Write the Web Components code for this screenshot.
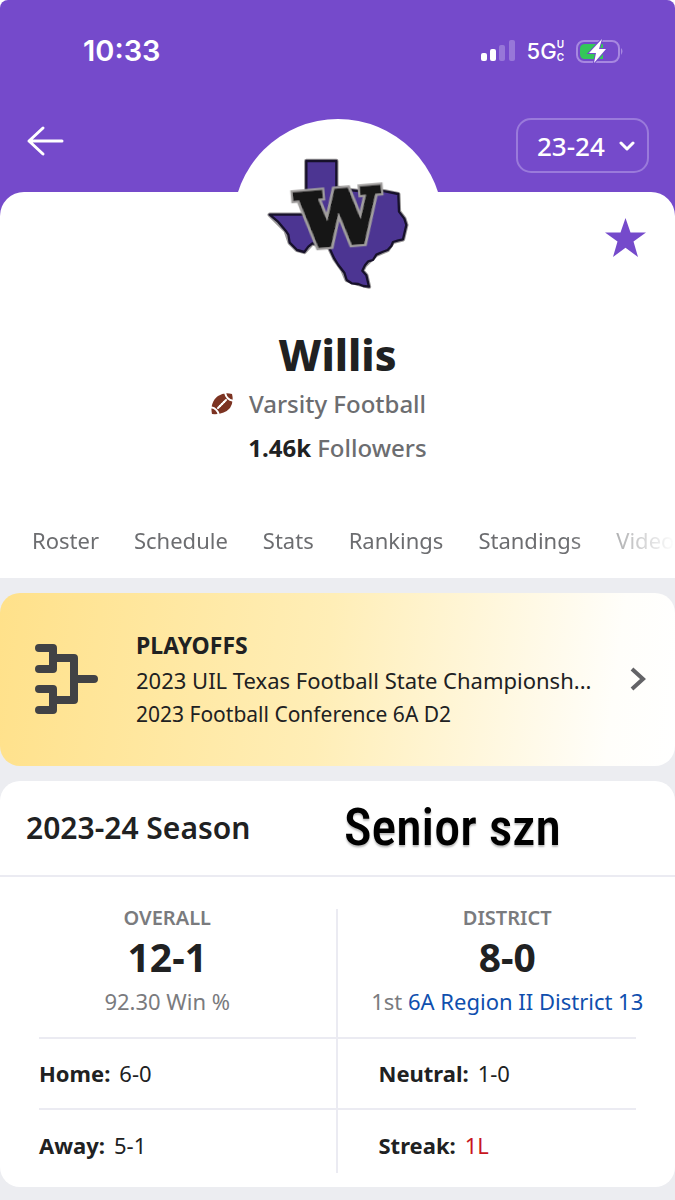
<!DOCTYPE html>
<html lang="en">
<head>
<meta charset="utf-8">
<meta name="viewport" content="width=device-width, initial-scale=1">
<title>Willis Varsity Football</title>
<style>
  :root {
    --brand: #754acb;
    --ink: #202122;
    --muted: #6c6d70;
    --line: #ebebf2;
    --page: #ecedf1;
  }
  body {
    margin: 0;
    background: var(--page);
    color: var(--ink);
    font: 22px/28px "Noto Sans", "Open Sans", sans-serif;
  }
</style>
</head>
<body>
<team-page></team-page>

<script>
class StatusBar extends HTMLElement {
  constructor() {
    super();
    this.attachShadow({ mode: 'open' });
    this.shadowRoot.innerHTML = `
      <style>
        :host {
          display: flex;
          align-items: center;
          justify-content: space-between;
          padding: 33px 51px 0 83px;
          color: #fff;
          font-family: Inter, sans-serif;
        }
        time { font-size: 29px; line-height: 36px; font-weight: 600; }
        .right { display: flex; align-items: center; gap: 12px; }
        .net { display: flex; align-items: center; font-size: 22px; font-weight: 500; }
        .net small {
          display: grid;
          font-size: 10px;
          line-height: 13px;
          font-weight: 600;
        }
        svg { display: block; }
      </style>
      <time><slot></slot></time>
      <div class="right">
        <svg width="34" height="22" viewBox="0 0 34 22" fill="#fff">
          <rect x="0" y="13" width="6" height="8" rx="2"/>
          <rect x="9" y="9" width="6" height="12" rx="2"/>
          <rect x="18" y="5" width="6" height="16" rx="2" opacity=".25"/>
          <rect x="28" y="0" width="6" height="21" rx="2" opacity=".25"/>
        </svg>
        <span class="net">5G<small><span>U</span><span>C</span></small></span>
        <svg width="48" height="24" viewBox="0 0 48 24">
          <rect x="1" y="2" width="42" height="21" rx="7" fill="none" stroke="#a788e0" stroke-width="2"/>
          <path d="M45 9q3 3 0 7z" fill="#a788e0"/>
          <path d="M9 5h18v15H9q-5 0-5-5V10q0-5 5-5z" fill="#34c759"/>
          <path d="M26 0L13 14h7l-2 10 12-14h-7z" fill="#fff" stroke="#754acb" stroke-width="2" paint-order="stroke"/>
        </svg>
      </div>
    `;
  }
}

class SeasonPicker extends HTMLElement {
  constructor() {
    super();
    this.attachShadow({ mode: 'open' });
    const years = (this.getAttribute('years') || '').split(',');
    this.shadowRoot.innerHTML = `
      <style>
        :host { display: grid; align-items: center; }
        select, svg { grid-area: 1 / 1; }
        select {
          appearance: none;
          width: 133px;
          height: 55px;
          padding: 0 19px;
          border: 2px solid #9a7adb;
          border-radius: 15px;
          background: transparent;
          color: #fff;
          font: 500 26px/28px "Noto Sans", "Open Sans", sans-serif;
        }
        option { color: #202122; }
        svg { justify-self: end; margin-right: 14px; pointer-events: none; }
      </style>
      <select aria-label="Season">
        ${years.map(y => `<option>${y}</option>`).join('')}
      </select>
      <svg width="16" height="12" viewBox="0 0 16 12" fill="none" stroke="#fff" stroke-width="3" stroke-linecap="round" stroke-linejoin="round">
        <path d="M2 3l6 6 6-6"/>
      </svg>
    `;
  }
}

class TeamLogo extends HTMLElement {
  constructor() {
    super();
    this.attachShadow({ mode: 'open' });
    this.shadowRoot.innerHTML = `
      <style>
        :host {
          display: block;
          width: 210px;
          height: 210px;
          border-radius: 50%;
          background: #fff;
        }
        svg { display: block; width: 100%; height: 100%; }
        text {
          font: bold 220px "DejaVu Serif", serif;
          fill: #161817;
          stroke: #161817;
          stroke-width: 14;
        }
      </style>
      <svg viewBox="-6 27 630 630" role="img" aria-label="Team logo">
        <defs>
          <filter id="edge" x="-10%" y="-10%" width="120%" height="120%">
            <feMorphology in="SourceAlpha" operator="dilate" radius="5" result="fat"/>
            <feFlood flood-color="#a19f9e"/>
            <feComposite in2="fat" operator="in"/>
            <feMerge><feMergeNode/><feMergeNode in="SourceGraphic"/></feMerge>
          </filter>
        </defs>
        <path fill="#4c3592" stroke="#9a9898" stroke-width="13" stroke-linejoin="round" d="M214 153H304V232L340 240L380 244L420 240L450 244L490 252L492 305L508 326L514 345L504 388L474 396L458 420L424 434L390 466L382 482L394 496L402 530L370 522L335 510L322 480L298 446L282 412L232 400L208 426L186 420L164 398L152 362L104 314H214Z"/>
        <path fill="#4c3592" stroke="#17112b" stroke-width="7" stroke-linejoin="round" d="M214 153H304V232L340 240L380 244L420 240L450 244L490 252L492 305L508 326L514 345L504 388L490 391L474 396L469 408L458 420L442 426L424 434L414 450L400 454L390 466L382 482L394 496L402 530L385 528L370 522L350 520L335 510L328 488L310 465L298 446L282 412L232 400L220 410L208 426L186 420L164 398L160 374L152 362L128 334L104 314H214Z"/>
        <text x="312" y="401" text-anchor="middle" transform="rotate(-5 312 320)" filter="url(#edge)">W</text>
      </svg>
    `;
  }
}

class TeamHeader extends HTMLElement {
  constructor() {
    super();
    this.attachShadow({ mode: 'open' });
    this.shadowRoot.innerHTML = `
      <style>
        :host { display: block; background: #fff; }
        header {
          padding-bottom: 19px;
          border-radius: 8px 8px 0 0;
          background: var(--brand);
        }
        .bar {
          display: flex;
          justify-content: space-between;
          align-items: flex-start;
          padding: 49px 26px 0;
        }
        button {
          display: grid;
          place-items: center;
          height: 46px;
          padding: 0;
          border: 0;
          background: none;
          cursor: pointer;
        }
      </style>
      <header>
        <status-bar>10:33</status-bar>
        <div class="bar">
          <button aria-label="Back">
            <svg width="38" height="32" viewBox="0 0 38 32" fill="none" stroke="#fff" stroke-width="3" stroke-linecap="round" stroke-linejoin="round">
              <path d="M36 16H3M17 3L3 16l14 13"/>
            </svg>
          </button>
          <season-picker years="23-24,22-23,21-22"></season-picker>
        </div>
      </header>
    `;
  }
}

class TeamProfile extends HTMLElement {
  constructor() {
    super();
    this.attachShadow({ mode: 'open' });
    this.shadowRoot.innerHTML = `
      <style>
        :host { display: block; background: var(--brand); }
        section {
          padding-bottom: 24px;
          border-radius: 24px 24px 0 0;
          background: #fff;
        }
        .top { display: grid; grid-template-columns: 1fr auto 1fr; }
        team-logo { grid-column: 2; margin-top: -73px; }
        button {
          justify-self: end;
          align-self: start;
          margin: 26px 29px 0 0;
          padding: 0;
          border: 0;
          background: none;
          cursor: pointer;
        }
        button svg { display: block; }
        h1 {
          margin: 4px 0 13px;
          text-align: center;
          font-size: 43px;
          line-height: 44px;
          font-weight: 800;
        }
        p {
          display: flex;
          justify-content: center;
          align-items: center;
          margin: 0 0 16px;
          font-size: 24px;
          font-weight: 500;
          color: var(--muted);
        }
        .sport { gap: 16px; padding-right: 38px; }
        .fans { gap: 6px; margin-bottom: 64px; }
        b { color: var(--ink); }
      </style>
      <section>
        <div class="top">
          <team-logo></team-logo>
          <button aria-label="Unfollow team">
            <svg width="41" height="39" viewBox="0 0 41 39">
              <path fill="#754acb" d="M20.500 0L25.500 14.500H41L28.500 23.500L33 39L20.500 29.800L8 39L12.500 23.500L0 14.500H15.500Z"/>
            </svg>
          </button>
        </div>
        <h1><slot name="name"></slot></h1>
        <p class="sport">
          <svg width="22" height="22" viewBox="0 0 22 22">
            <path fill="#7c3322" d="M1 21C-1 12 3 6 7 3Q13-1 21 1Q23 9 19 15Q13 22 1 21Z"/>
            <path d="M-1 14q8 1 9 9M14-1q1 8 9 9" fill="none" stroke="#fff" stroke-width="2"/>
            <path d="M7 15l8-8" stroke="#fff" stroke-width="2" stroke-linecap="round"/>
            <path d="M8 12l2 2M10 10l2 2M12 8l2 2" stroke="#fff"/>
          </svg>
          <slot name="sport"></slot>
        </p>
        <p class="fans"><b><slot name="count"></slot></b> <span>Followers</span></p>
        <slot></slot>
      </section>
    `;
  }
}

class TabStrip extends HTMLElement {
  constructor() {
    super();
    this.attachShadow({ mode: 'open' });
    this.shadowRoot.innerHTML = `
      <style>
        :host { display: block; }
        nav {
          display: flex;
          gap: 35px;
          padding-left: 32px;
          overflow: hidden;
          white-space: nowrap;
          -webkit-mask: linear-gradient(to right, #000 calc(100% - 110px), transparent);
          mask: linear-gradient(to right, #000 calc(100% - 110px), transparent);
        }
        ::slotted(a) { color: var(--muted); text-decoration: none; }
      </style>
      <nav><slot></slot></nav>
    `;
  }
}

class PlayoffCard extends HTMLElement {
  constructor() {
    super();
    this.attachShadow({ mode: 'open' });
    this.shadowRoot.innerHTML = `
      <style>
        :host { display: block; }
        a {
          display: flex;
          align-items: center;
          padding: 35px 28px 36px 35px;
          border-radius: 20px;
          background: linear-gradient(97deg, #ffe18a, #ffeeb7 48%, #fffefa 90%, #fff);
          color: inherit;
          text-decoration: none;
        }
        .text {
          flex: 1;
          min-width: 0;
          margin-left: 37px;
          line-height: 35px;
          white-space: nowrap;
        }
        .text div { overflow: hidden; text-overflow: ellipsis; }
        .title { font-size: 23px; font-weight: 700; }
        .text .small { font-size: 21px; line-height: 32px; }
      </style>
      <a href="#playoffs">
        <svg width="64" height="70" viewBox="0 0 64 70" fill="none" stroke="#414245" stroke-width="8" stroke-linecap="round" stroke-linejoin="round">
          <path d="M4 4h14v21H4M4 45h14v21H4M18 14h21v42H18M39 35h20"/>
        </svg>
        <div class="text">
          <div class="title"><slot name="title"></slot></div>
          <div><slot name="event"></slot></div>
          <div class="small"><slot name="group"></slot></div>
        </div>
        <svg width="18" height="26" viewBox="0 0 18 26" fill="none" stroke="#636366" stroke-width="4">
          <path d="M3 3l11 10L3 23"/>
        </svg>
      </a>
    `;
  }
}

class SeasonCard extends HTMLElement {
  constructor() {
    super();
    this.attachShadow({ mode: 'open' });
    this.shadowRoot.innerHTML = `
      <style>
        :host {
          display: block;
          padding-bottom: 14px;
          border-radius: 20px;
          background: #fff;
        }
        .head {
          display: grid;
          grid-template-columns: 344fr 331fr;
          align-items: center;
          height: 94px;
          border-bottom: 2px solid var(--line);
        }
        h2 { margin: 0 0 0 26px; font-size: 30px; line-height: 36px; font-weight: 600; }
        .note {
          color: #000;
          font: 500 52px/60px "Roboto Condensed", Roboto, sans-serif;
          text-shadow: 0 2px 2px #bbb;
          white-space: nowrap;
        }
        .grid {
          display: grid;
          grid-template-columns: 1fr 1fr;
          padding: 32px 39px 0;
        }
      </style>
      <div class="head">
        <h2><slot name="title"></slot></h2>
        <div class="note"><slot name="note"></slot></div>
      </div>
      <div class="grid"><slot></slot></div>
    `;
  }
}

class RecordSummary extends HTMLElement {
  constructor() {
    super();
    this.attachShadow({ mode: 'open' });
    this.shadowRoot.innerHTML = `
      <style>
        :host {
          display: block;
          height: 128px;
          padding-right: 40px;
          border-right: 2px solid var(--line);
          border-bottom: 2px solid var(--line);
          text-align: center;
          white-space: nowrap;
          color: #7a7b7e;
        }
        :host(.end) {
          padding: 0 0 0 41px;
          border-right: 0;
        }
        h3 { margin: 0; font-size: 20px; line-height: 18px; font-weight: 600; }
        .score {
          margin: 8px 0;
          font-size: 39px;
          line-height: 44px;
          font-weight: 700;
          color: var(--ink);
        }
        .detail { margin: 0 -16px; }
      </style>
      <h3><slot name="label"></slot></h3>
      <div class="score"><slot name="score"></slot></div>
      <div class="detail"><slot></slot></div>
    `;
  }
}

class RecordRow extends HTMLElement {
  constructor() {
    super();
    this.attachShadow({ mode: 'open' });
    this.shadowRoot.innerHTML = `
      <style>
        :host {
          box-sizing: border-box;
          display: flex;
          align-items: center;
          gap: 9px;
          height: 71px;
          padding-bottom: 2px;
          border-right: 2px solid var(--line);
          border-bottom: 2px solid var(--line);
        }
        :host(.end) {
          padding-left: 41px;
          border-right: 0;
        }
        :host(.last) { height: 63px; padding-top: 8px; border-bottom: 0; }
        b { font-weight: 700; }
      </style>
      <b>${this.getAttribute('label')}</b><span><slot></slot></span>
    `;
  }
}

class TeamPage extends HTMLElement {
  constructor() {
    super();
    this.attachShadow({ mode: 'open' });
    this.shadowRoot.innerHTML = `
      <style>
        :host { display: block; }
        main { display: grid; gap: 15px; padding-bottom: 12px; }
        .district { color: #0f4fae; text-decoration: none; }
        .loss { color: #c8161d; }
      </style>
      <team-header></team-header>
      <main>
        <team-profile>
          <span slot="name">Willis</span>
          <span slot="sport">Varsity Football</span>
          <span slot="count">1.46k</span>
          <tab-strip>
            <a href="#roster">Roster</a>
            <a href="#schedule">Schedule</a>
            <a href="#stats">Stats</a>
            <a href="#rankings">Rankings</a>
            <a href="#standings">Standings</a>
            <a href="#video">Video</a>
          </tab-strip>
        </team-profile>
        <playoff-card>
          <span slot="title">PLAYOFFS</span>
          <span slot="event">2023 UIL Texas Football State Championsh...</span>
          <span slot="group">2023 Football Conference 6A D2</span>
        </playoff-card>
        <season-card>
          <span slot="title">2023-24 Season</span>
          <span slot="note">Senior szn</span>
          <record-summary>
            <span slot="label">OVERALL</span>
            <span slot="score">12-1</span>
            92.30 Win %
          </record-summary>
          <record-summary class="end">
            <span slot="label">DISTRICT</span>
            <span slot="score">8-0</span>
            1st <a class="district" href="#district">6A Region II District 13</a>
          </record-summary>
          <record-row label="Home:">6-0</record-row>
          <record-row label="Neutral:" class="end">1-0</record-row>
          <record-row label="Away:" class="last">5-1</record-row>
          <record-row label="Streak:" class="end last"><span class="loss">1L</span></record-row>
        </season-card>
      </main>
    `;
  }
}

customElements.define('status-bar', StatusBar);
customElements.define('season-picker', SeasonPicker);
customElements.define('team-logo', TeamLogo);
customElements.define('team-header', TeamHeader);
customElements.define('team-profile', TeamProfile);
customElements.define('tab-strip', TabStrip);
customElements.define('playoff-card', PlayoffCard);
customElements.define('season-card', SeasonCard);
customElements.define('record-summary', RecordSummary);
customElements.define('record-row', RecordRow);
customElements.define('team-page', TeamPage);
</script>
</body>
</html>
